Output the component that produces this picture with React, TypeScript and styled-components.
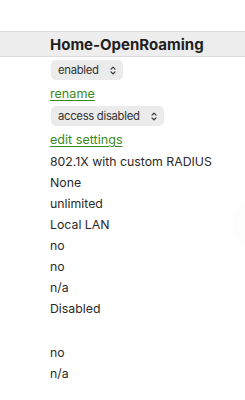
import React from "react";
import styled, { createGlobalStyle } from "styled-components";

const Global = createGlobalStyle`
  html, body { margin: 0; padding: 0; background: #fff; }
  body { font-family: Inter, "Noto Sans", sans-serif; color: #2b2b2b; }
`;

const Page = styled.div`
  position: relative;
  width: 245px;
  height: 400px;
  overflow: hidden;
  display: flex;
  flex-direction: column;
  padding-top: 31px;
  box-sizing: border-box;
`;

const Header = styled.div`
  height: 24px;
  border-top: 1px solid #dcdcdc;
  border-bottom: 1px solid #dcdcdc;
  background: #ededed;
  display: flex;
  align-items: center;
  padding-left: 50px;
  font-size: 15px;
  font-weight: 700;
  color: #1f1f1f;
`;

const Row = styled.div<{ $h: number }>`
  height: ${(p) => p.$h}px;
  display: flex;
  align-items: center;
  padding-left: 50px;
  font-size: 12.3px;
  color: #2a2a2a;
  white-space: nowrap;
`;

const Link = styled.a`
  color: #3b8a24;
  text-decoration: underline;
  text-underline-offset: 2px;
  font-size: 12.6px;
  cursor: pointer;
`;

const Select = styled.div`
  margin-left: 1px;
  height: 20px;
  display: inline-flex;
  align-items: center;
  gap: 11px;
  padding: 0 7px 0 7px;
  border-radius: 5px;
  background: #ebebeb;
  font-size: 11.3px;
  letter-spacing: -0.3px;
  color: #333;
`;

const Floating = styled.div`
  position: absolute;
  left: 235px;
  top: 200px;
  width: 48px;
  height: 48px;
  border-radius: 50%;
  background: #fdfdfd;
  box-shadow: 0 0 2px rgba(0, 0, 0, 0.06);
`;

const Chevron = () => (
  <svg width="6" height="9" viewBox="0 0 6 9" fill="none" stroke="#333" strokeWidth="1.2" strokeLinecap="round" strokeLinejoin="round">
    <path d="M1 3.2 L3 1.2 L5 3.2" />
    <path d="M1 5.8 L3 7.8 L5 5.8" />
  </svg>
);

const values = ["802.1X with custom RADIUS", "None", "unlimited", "Local LAN", "no", "no", "n/a", "Disabled"];

export default function App() {
  return (
    <Page>
      <Global />
      <Header>Home-OpenRoaming</Header>
      <Row $h={26}>
        <Select>
          enabled <Chevron />
        </Select>
      </Row>
      <Row $h={21}>
        <Link>rename</Link>
      </Row>
      <Row $h={24}>
        <Select>
          access disabled <Chevron />
        </Select>
      </Row>
      <Row $h={23}>
        <Link>edit settings</Link>
      </Row>
      {values.map((v, i) => (
        <Row key={i} $h={21}>
          {v}
        </Row>
      ))}
      <Row $h={23} />
      <Row $h={21}>no</Row>
      <Row $h={21}>n/a</Row>
      <Floating />
    </Page>
  );
}
